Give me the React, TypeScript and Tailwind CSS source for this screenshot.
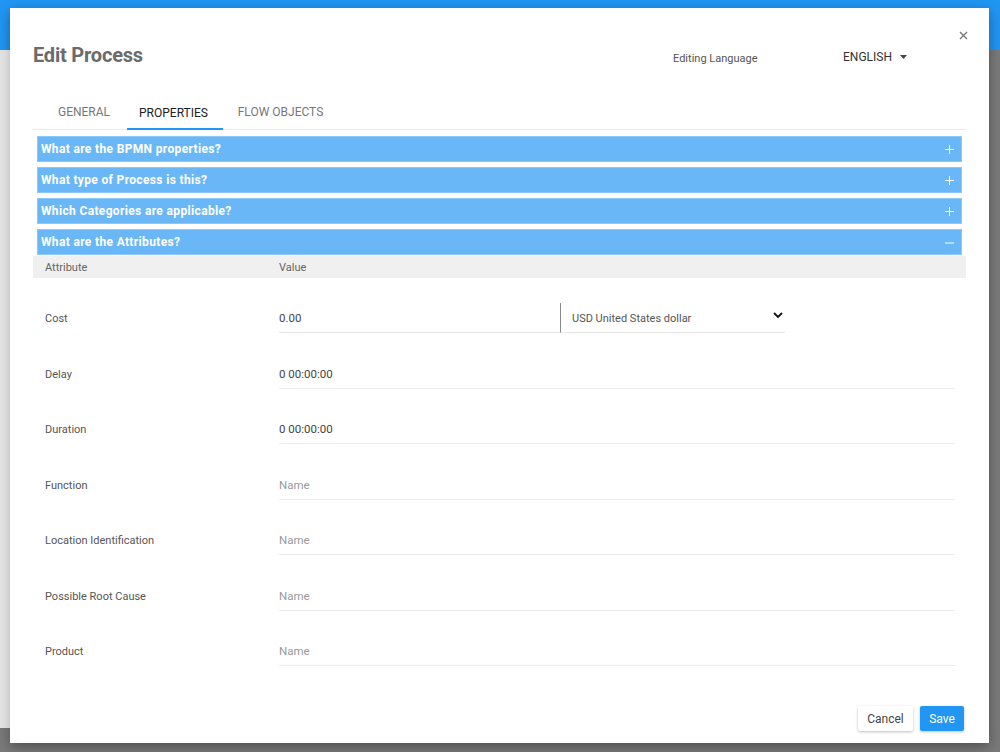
import React from "react";

const rows: { label: string; value: string; placeholder?: boolean }[] = [
  { label: "Delay", value: "0 00:00:00" },
  { label: "Duration", value: "0 00:00:00" },
  { label: "Function", value: "Name", placeholder: true },
  { label: "Location Identification", value: "Name", placeholder: true },
  { label: "Possible Root Cause", value: "Name", placeholder: true },
  { label: "Product", value: "Name", placeholder: true },
];

const sections = [
  { title: "What are the BPMN properties?", open: false },
  { title: "What type of Process is this?", open: false },
  { title: "Which Categories are applicable?", open: false },
  { title: "What are the Attributes?", open: true },
];

export default function App() {
  return (
    <div
      className="relative w-[1000px] h-[752px] overflow-hidden bg-[#7a7a7a]"
      style={{ fontFamily: "Roboto, 'Liberation Sans', sans-serif" }}
    >
      <div className="h-[50px] bg-[#2196f3]" />
      <div className="absolute left-0 top-[50px] w-[12px] h-[678px] bg-gradient-to-r from-[#e4e4e4] to-[#fafafa]" />

      <div className="absolute left-[10px] top-[8px] w-[979px] h-[735px] bg-white shadow-[0_4px_12px_rgba(0,0,0,0.35)] flex flex-col">
        {/* header */}
        <div className="relative h-[82px] shrink-0">
          <div className="absolute left-[23px] top-[37px] text-[20px] font-bold text-[#6b6b6b] leading-none tracking-[-0.2px]">
            Edit Process
          </div>
          <div className="absolute left-[663px] top-[45px] text-[11px] text-[#555] leading-none">
            Editing Language
          </div>
          <div className="absolute left-[833px] top-[43px] flex items-center text-[12px] text-[#333] leading-none">
            ENGLISH
            <svg className="ml-[8px]" width="7" height="4" viewBox="0 0 7 4">
              <path d="M0 0h7L3.5 4z" fill="#444" />
            </svg>
          </div>
          <div className="absolute left-[949px] top-[23px] text-[#777]">
            <svg width="9" height="9" viewBox="0 0 9 9">
              <path d="M1 1l7 7M8 1l-7 7" stroke="#777" strokeWidth="1.3" />
            </svg>
          </div>
        </div>

        {/* tabs */}
        <div className="mx-[23px] h-[40px] border-b border-[#ebebeb] flex text-[12px] uppercase shrink-0">
          <div className="w-[94px] pl-[8px] flex items-center justify-center text-[#777] pt-[5px]">General</div>
          <div className="w-[96px] pr-[3px] flex items-center justify-center text-[#222] border-b-2 border-[#2196f3] -mb-[1px] pt-[7px]">
            Properties
          </div>
          <div className="w-[115px] flex items-center justify-center text-[#777] pt-[5px]">Flow Objects</div>
        </div>

        {/* accordion */}
        <div className="mx-[27px] mt-[6px] flex flex-col gap-[5px]">
          {sections.map((s) => (
            <div
              key={s.title}
              className="h-[26px] bg-[#6ab7f8] border border-[#8cc8fa] flex items-center justify-between pl-[3px] pr-[7px]"
            >
              <span className="text-white font-bold text-[12px] tracking-[0.35px]">{s.title}</span>
              {s.open ? (
                <svg width="9" height="9" viewBox="0 0 9 9">
                  <path d="M0 5h9" stroke="#fff" strokeWidth="1" />
                </svg>
              ) : (
                <svg width="9" height="9" viewBox="0 0 9 9">
                  <path d="M0 4.5h9M4.5 0v9" stroke="#fff" strokeWidth="1" />
                </svg>
              )}
            </div>
          ))}
        </div>

        {/* table */}
        <div className="mx-[23px] mt-[1px]">
          <div className="h-[22px] bg-[#f0f0f0] flex items-center text-[11px] text-[#666] pt-[2px]">
            <div className="w-[246px] pl-[12px]">Attribute</div>
            <div>Value</div>
          </div>

          {/* cost */}
          <div className="h-[55.5px] mt-[25px] flex">
            <div className="w-[246px] pl-[12px] pt-[8px] text-[#555] text-[11px]">Cost</div>
            <div className="w-[676px] flex h-[30px]">
              <div className="w-[281px] border-b border-[#e6e6e6] pt-[7px] text-[#444] text-[11.5px]">0.00</div>
              <div className="w-[225px] border-b border-[#e6e6e6] border-l border-l-[#888] pl-[11px] pr-[2px] pt-[8px] flex justify-between text-[#555] text-[11px]">
                <span>USD United States dollar</span>
                <svg className="mt-[1px]" width="10" height="7" viewBox="0 0 10 7">
                  <path d="M1 1l4 4 4-4" fill="none" stroke="#111" strokeWidth="1.8" />
                </svg>
              </div>
            </div>
          </div>

          {rows.map((r) => (
            <div key={r.label} className="h-[55.5px] flex">
              <div className="w-[246px] pl-[12px] pt-[8px] text-[#555] text-[11px]">{r.label}</div>
              <div
                className={
                  "w-[676px] h-[30px] border-b border-[#ebebeb] pt-[7px] text-[11.5px] " +
                  (r.placeholder ? "text-[#999]" : "text-[#444]")
                }
              >
                {r.value}
              </div>
            </div>
          ))}
        </div>

        {/* footer */}
        <div className="mt-auto mb-[12px] mr-[25px] flex justify-end gap-[7px]">
          <button className="h-[25px] w-[55px] bg-white text-[#444] text-[12px] rounded-[2px] shadow-[0_1px_3px_rgba(0,0,0,0.25)]">
            Cancel
          </button>
          <button className="h-[25px] w-[44px] bg-[#2196f3] text-white text-[12px] rounded-[2px] shadow-[0_1px_3px_rgba(0,0,0,0.25)]">
            Save
          </button>
        </div>
      </div>
    </div>
  );
}
